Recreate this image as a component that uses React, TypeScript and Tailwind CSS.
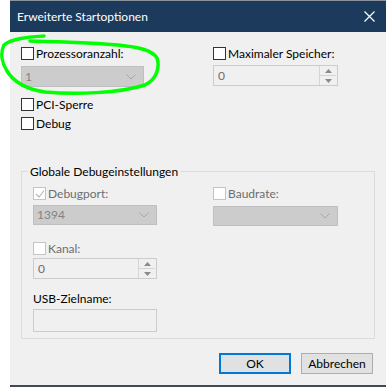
import type { ReactNode } from "react";

const font = { fontFamily: 'Lato, "Noto Sans", sans-serif' };

function Check({ label, disabled, checked }: { label: string; disabled?: boolean; checked?: boolean }) {
  return (
    <div className="flex h-[13px] items-center">
      <div
        className={`relative h-[13px] w-[13px] shrink-0 border bg-white ${
          disabled ? "border-[#c4c4c4]" : "border-[#333333]"
        }`}
      >
        {checked && (
          <svg className="absolute left-[1px] top-[1px]" width="10" height="10" viewBox="0 0 10 10">
            <path d="M1 5 L4 8 L9 1.5" fill="none" stroke="#bcbcbc" strokeWidth="1.2" />
          </svg>
        )}
      </div>
      <span className={`ml-[2px] text-[12px] leading-none ${disabled ? "text-[#6d6d6d]" : "text-black"}`}>{label}</span>
    </div>
  );
}

function Chevron() {
  return (
    <svg width="10" height="6" viewBox="0 0 10 6">
      <path d="M0.5 0.5 L5 5 L9.5 0.5" fill="none" stroke="#a6a6a6" strokeWidth="1" />
    </svg>
  );
}

function Select({ value, w, h }: { value?: string; w: string; h: string }) {
  return (
    <div className={`flex ${w} ${h} items-center justify-between border border-[#bfbfbf] bg-[#cccccc] pl-[3px] pr-[7px]`}>
      <span className="text-[12px] text-[#838383]">{value}</span>
      <Chevron />
    </div>
  );
}

function Spin({ value, w }: { value: string; w: string }) {
  return (
    <div className={`flex ${w} h-[21px] items-center justify-between border border-[#cccccc] bg-[#f0f0f0] pl-[4px] pr-[1px]`}>
      <span className="text-[12px] text-[#6d6d6d]">{value}</span>
      <div className="flex h-[19px] w-[17px] flex-col border-l border-[#d5d5d5]">
        <div className="flex flex-1 items-center justify-center border-b border-[#d5d5d5]">
          <svg width="7" height="4" viewBox="0 0 7 4">
            <path d="M0 4 L3.5 0 L7 4 Z" fill="#8a8a8a" />
          </svg>
        </div>
        <div className="flex flex-1 items-center justify-center">
          <svg width="7" height="4" viewBox="0 0 7 4">
            <path d="M0 0 L3.5 4 L7 0 Z" fill="#8a8a8a" />
          </svg>
        </div>
      </div>
    </div>
  );
}

function Button({ children, primary }: { children: ReactNode; primary?: boolean }) {
  return (
    <div
      className={`flex h-[21px] w-[72px] items-center justify-center bg-[#e1e1e1] text-[12px] text-black ${
        primary ? "border-2 border-[#0078d7]" : "border border-[#adadad]"
      }`}
    >
      {children}
    </div>
  );
}

export default function App() {
  return (
    <div className="relative flex h-[387px] w-[386px] bg-white pl-[10px]" style={font}>
      <div className="flex w-[376px] flex-col">
        <div className="flex h-[32px] items-center justify-between border-t border-[#8a929c] bg-[#1b3a5c] pl-[7px] pr-[11px]">
          <span className="text-[12px] text-white">Erweiterte Startoptionen</span>
          <svg width="11" height="11" viewBox="0 0 11 11">
            <path d="M0.5 0.5 L10.5 10.5 M10.5 0.5 L0.5 10.5" stroke="#ffffff" strokeWidth="1.2" />
          </svg>
        </div>

        <div className="flex flex-1 flex-col bg-[#f0f0f0] pl-[11px]">
          <div className="mt-[15px] grid grid-cols-[192px_1fr]">
            <div className="flex flex-col">
              <Check label="Prozessoranzahl:" />
              <div className="mt-[6px]">
                <Select value="1" w="w-[123px]" h="h-[21px]" />
              </div>
              <div className="mt-[11px]">
                <Check label="PCI-Sperre" />
              </div>
              <div className="mt-[6px]">
                <Check label="Debug" />
              </div>
            </div>
            <div className="flex flex-col">
              <Check label="Maximaler Speicher:" />
              <div className="mt-[5px]">
                <Spin value="0" w="w-[125px]" />
              </div>
            </div>
          </div>

          <div className="relative mt-[41px] h-[168px] w-[354px] border border-[#dcdcdc]">
            <span className="absolute -top-[8px] left-[6px] bg-[#f0f0f0] px-[2px] text-[12px] leading-[16px] text-black">
              Globale Debugeinstellungen
            </span>
            <div className="grid grid-cols-[180px_1fr] pl-[11px] pt-[15px]">
              <div className="flex flex-col">
                <Check label="Debugport:" disabled checked />
                <div className="mt-[5px]">
                  <Select value="1394" w="w-[124px]" h="h-[20px]" />
                </div>
                <div className="mt-[17px]">
                  <Check label="Kanal:" disabled />
                </div>
                <div className="mt-[3px]">
                  <Spin value="0" w="w-[124px]" />
                </div>
                <span className="mt-[12px] text-[12px] leading-[16px] text-black">USB-Zielname:</span>
                <div className="mt-[2px] h-[23px] w-[124px] border border-[#cccccc] bg-[#f0f0f0]" />
              </div>
              <div className="flex flex-col">
                <Check label="Baudrate:" disabled />
                <div className="mt-[6px]">
                  <Select w="w-[125px]" h="h-[20px]" />
                </div>
              </div>
            </div>
          </div>

          <div className="mt-[14px] flex justify-end gap-[10px] pr-[13px]">
            <Button primary>OK</Button>
            <Button>Abbrechen</Button>
          </div>
        </div>
        <div className="h-[2px] bg-[#3d4a5a]" />
      </div>

      <svg className="pointer-events-none absolute left-0 top-0" width="386" height="387" viewBox="0 0 386 387">
        <path
          d="M44 36 C30 37 12 38 4 45 C0 53 2 63 7 71 C13 81 25 89 45 92 C75 95 120 93 145 85 C157 79 160 67 157 58 C152 50 138 47 118 45 C95 43 70 42 30 41"
          fill="none"
          stroke="#00ff00"
          strokeWidth="3.5"
          strokeLinecap="round"
        />
      </svg>
    </div>
  );
}
